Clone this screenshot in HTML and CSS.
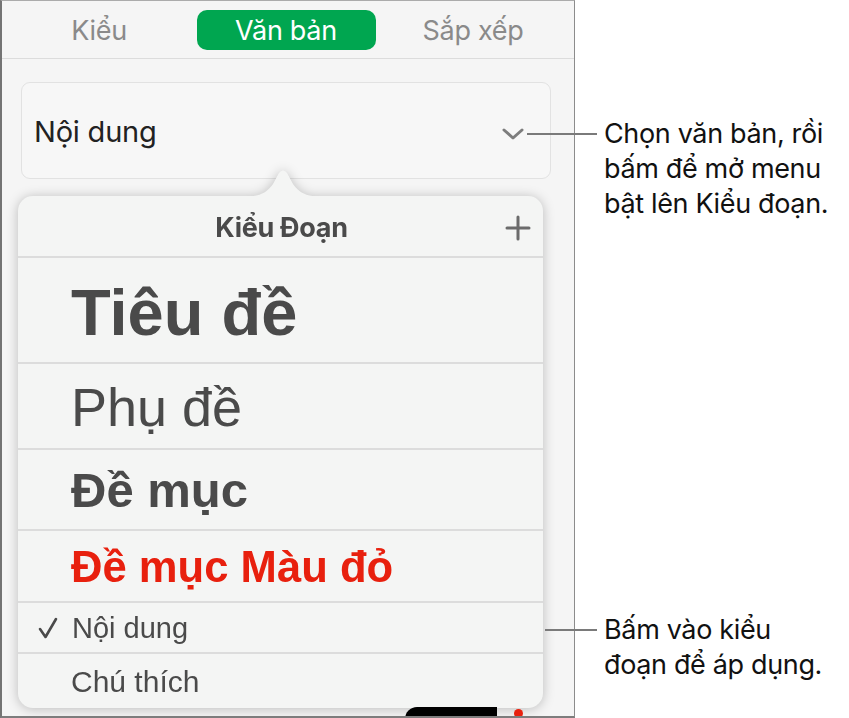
FILE: index.html
```html
<!DOCTYPE html>
<html lang="vi">
<head>
<meta charset="utf-8">
<title>Kiểu Đoạn</title>
<link rel="stylesheet" href="styles.css">
</head>
<body>
<div class="stage">
  <div class="panel">
    <div class="tabs">
      <div class="tab">Kiểu</div>
      <div class="tab active">Văn bản</div>
      <div class="tab">Sắp xếp</div>
    </div>
    <div class="select">
      <span class="select-label">Nội dung</span>
      <svg class="chevron" width="22" height="12" viewBox="0 0 22 12"><path d="M2 2 L11 10 L20 2" fill="none" stroke="#7d7d7d" stroke-width="3" stroke-linecap="round" stroke-linejoin="round"/></svg>
    </div>
    <div class="popover">
      <svg class="arrow" width="92" height="28" viewBox="0 0 92 28"><path d="M0 28 C20 28 28 26 36 15 L42 4 Q46 -1 50 4 L56 15 C64 26 72 28 92 28 Z" fill="#f4f5f4"/></svg>
      <div class="pop-body">
        <div class="pop-head">
          <span class="pop-title">Kiểu Đoạn</span>
          <svg class="plus" width="26" height="26" viewBox="0 0 26 26"><path d="M13 2 V24 M2 13 H24" stroke="#6b6b6b" stroke-width="3" stroke-linecap="round"/></svg>
        </div>
        <div class="row r-title"><span>Tiêu đề</span></div>
        <div class="row r-sub"><span>Phụ đề</span></div>
        <div class="row r-head"><span>Đề mục</span></div>
        <div class="row r-red"><span>Đề mục Màu đỏ</span></div>
        <div class="row r-body"><svg class="check" width="20" height="22" viewBox="0 0 20 22"><path d="M2 12 L7.5 20 L18 2" fill="none" stroke="#4a4a4a" stroke-width="2.6" stroke-linecap="round" stroke-linejoin="round"/></svg><span>Nội dung</span></div>
        <div class="row r-cap"><span>Chú thích</span></div>
      </div>
    </div>
    <div class="under-black"></div>
    <div class="under-red"></div>
  </div>
  <div class="callout c1">
    <div class="leader l1"></div>
    <p>Chọn văn bản, rồi<br>bấm để mở menu<br>bật lên Kiểu đoạn.</p>
  </div>
  <div class="callout c2">
    <div class="leader l2"></div>
    <p>Bấm vào kiểu<br>đoạn để áp dụng.</p>
  </div>
</div>
</body>
</html>
```
FILE: styles.css
```css
html, body {
  margin: 0;
  padding: 0;
  background: #ffffff;
}
body {
  font-family: "Inter", "Liberation Sans", sans-serif;
  width: 849px;
  height: 718px;
  overflow: hidden;
}
.stage {
  position: relative;
  width: 849px;
  height: 718px;
}
.panel {
  position: relative;
  box-sizing: border-box;
  width: 575px;
  height: 718px;
  border-left: 2px solid #747474;
  border-top: 1px solid #ababab;
  border-right: 1px solid #8c8c8c;
  border-bottom: 2px solid #7d7d7d;
  background: #f5f5f5;
  overflow: hidden;
}
.tabs {
  display: grid;
  grid-template-columns: 179px 179px 179px;
  column-gap: 8px;
  justify-content: center;
  align-items: center;
  box-sizing: border-box;
  height: 58px;
  padding-top: 1px;
  padding-right: 4px;
  border-bottom: 1px solid #dcdcdc;
}
.tab {
  height: 40px;
  border-radius: 10px;
  display: flex;
  align-items: center;
  justify-content: center;
  font-size: 27px;
  color: #8a8a8a;
  letter-spacing: -0.3px;
}
.tab.active {
  background: #00a650;
  color: #ffffff;
}
.select {
  margin: 23px 0 0 19px;
  width: 530px;
  height: 97px;
  box-sizing: border-box;
  border: 1px solid #e2e2e2;
  border-radius: 9px;
  background: #f7f7f7;
  display: flex;
  align-items: center;
  justify-content: space-between;
  padding: 0 26px 0 12px;
}
.select-label {
  font-size: 29px;
  color: #222222;
  letter-spacing: -0.2px;
  margin-top: 2px;
}
.chevron {
  margin-top: 6px;
}
.popover {
  position: relative;
  margin: 17px 0 0 16px;
  width: 525px;
  filter: drop-shadow(0 1px 6px rgba(0,0,0,0.24));
}
.arrow {
  position: absolute;
  left: 219px;
  top: -27px;
}
.pop-body {
  background: #f4f5f4;
  border-radius: 15px;
  height: 512px;
  overflow: hidden;
}
.pop-head {
  position: relative;
  height: 62px;
  display: flex;
  align-items: center;
  justify-content: center;
  border-bottom: 2px solid #dcdcdc;
  box-sizing: border-box;
}
.pop-title {
  font-weight: 700;
  font-size: 27px;
  color: #4a4a4a;
  letter-spacing: -0.3px;
  margin-left: 2px;
  margin-top: 2px;
}
.plus {
  position: absolute;
  right: 12px;
  top: 19px;
}
.row {
  display: flex;
  align-items: center;
  padding-left: 53px;
  box-sizing: border-box;
  border-bottom: 2px solid #dcdcdc;
  font-family: "Liberation Sans", "Inter", sans-serif;
  color: #4a4a4a;
  line-height: 1;
  white-space: nowrap;
}
.row span {
  display: block;
}
.r-title {
  height: 106px;
  font-size: 65px;
  font-weight: 700;
  padding-top: 4px;
}
.r-sub {
  height: 86px;
  font-size: 54px;
  padding-top: 2px;
}
.r-head {
  height: 81px;
  font-size: 49px;
  font-weight: 700;
  padding-top: 2px;
}
.r-red {
  height: 72px;
  font-size: 43.6px;
  font-weight: 700;
  color: #e8200e;
  padding-top: 4px;
}
.r-body {
  height: 51px;
  font-size: 29px;
  padding-left: 20px;
  padding-top: 2px;
}
.check {
  margin-right: 14px;
  margin-top: -2px;
}
.r-cap {
  height: 59px;
  font-size: 30px;
  border-bottom: none;
  padding-bottom: 4px;
}
.under-black {
  position: absolute;
  left: 403px;
  top: 706px;
  width: 92px;
  height: 20px;
  background: #000000;
  border-radius: 12px 0 0 0;
}
.under-red {
  position: absolute;
  left: 512px;
  top: 708px;
  width: 9px;
  height: 9px;
  background: #e8200e;
  border-radius: 50%;
}
.callout {
  position: absolute;
  left: 604px;
}
.callout p {
  margin: 0;
  font-size: 27px;
  line-height: 35px;
  color: #111111;
  letter-spacing: -0.35px;
  white-space: nowrap;
}
.c1 {
  top: 116px;
}
.c2 {
  top: 612px;
}
.leader {
  position: absolute;
  height: 2px;
  background: #7a7a7a;
}
.l1 {
  left: -77px;
  width: 70px;
  top: 17px;
}
.l2 {
  left: -59px;
  width: 52px;
  top: 17px;
}
```
